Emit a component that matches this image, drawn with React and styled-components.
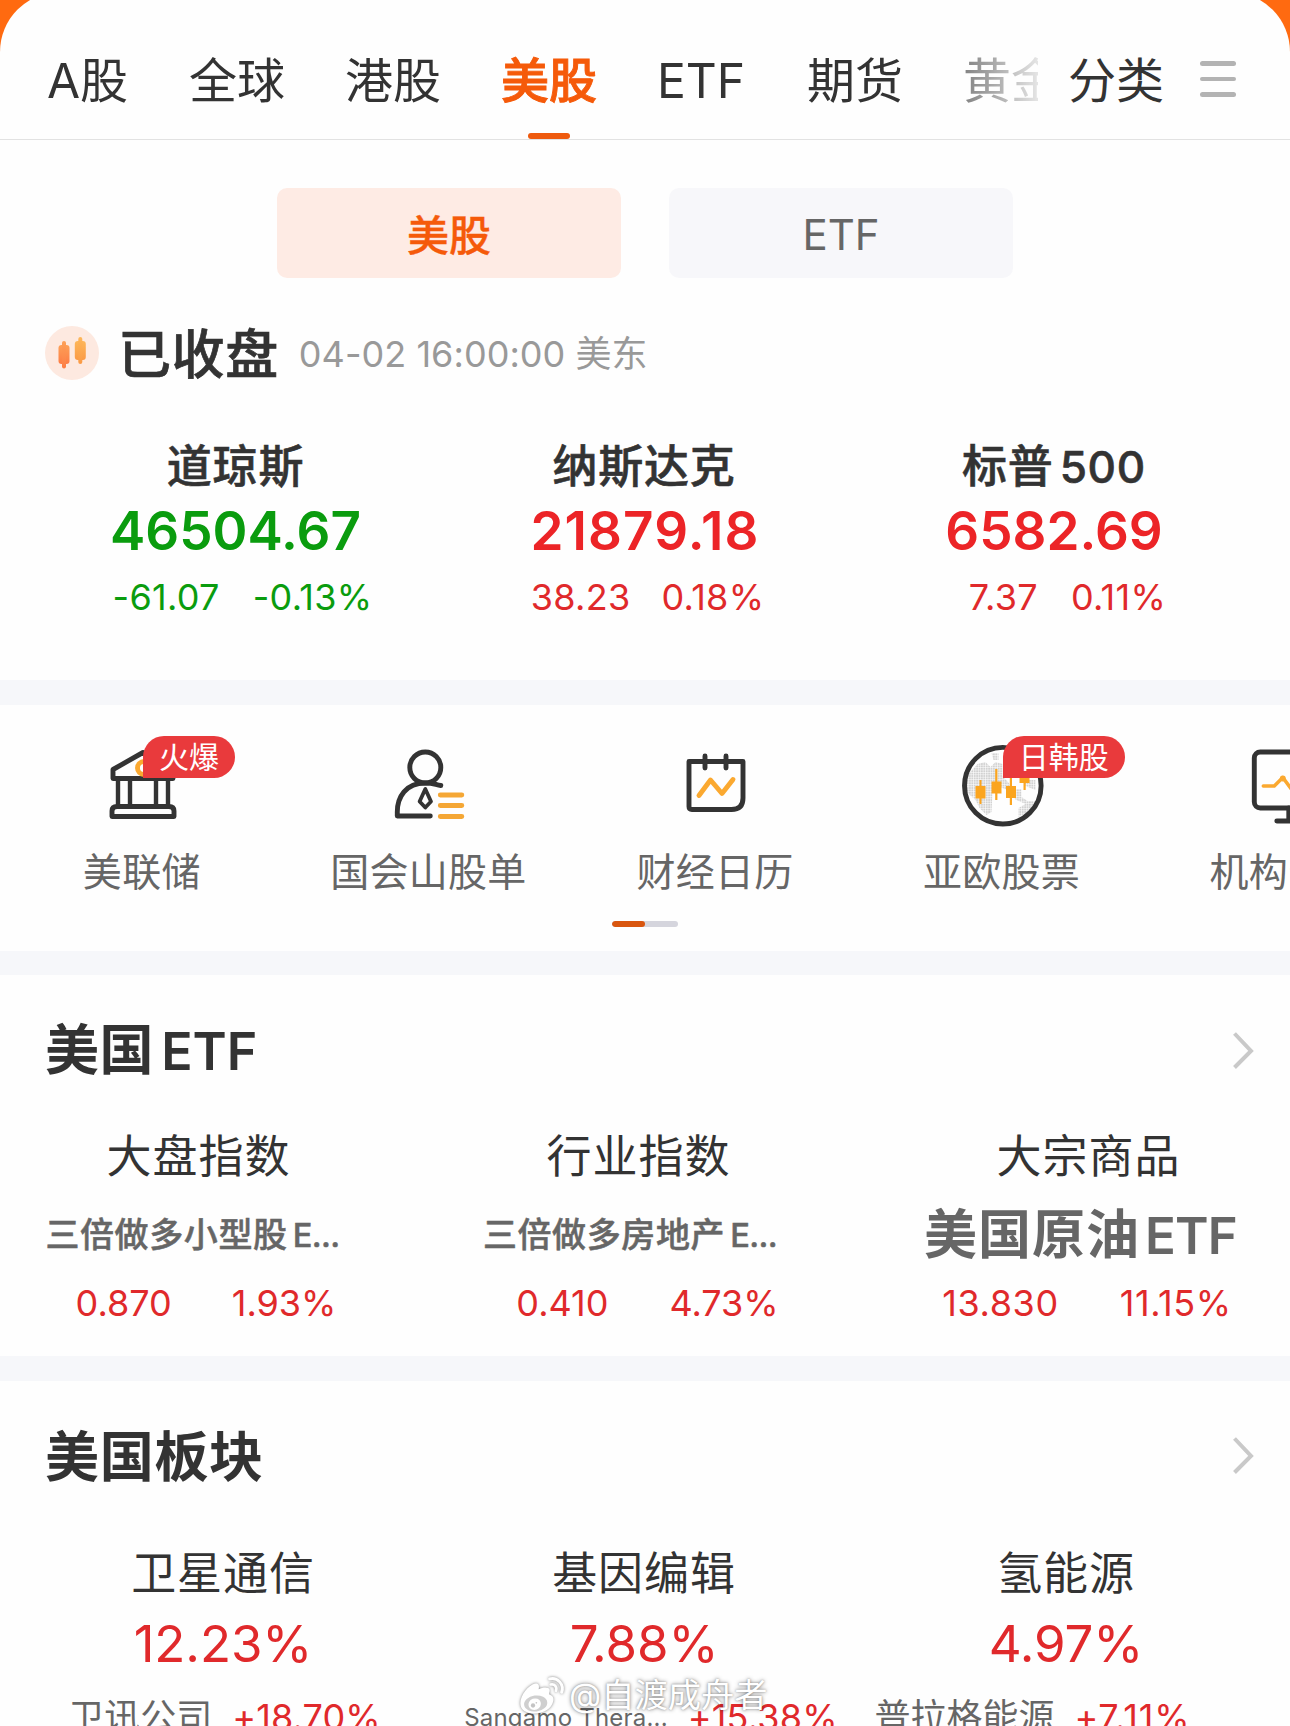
import React from "react";
import styled, { createGlobalStyle, css } from "styled-components";

const Global = createGlobalStyle`
  * { box-sizing: border-box; }
  html, body { margin: 0; padding: 0; }
  body {
    background: #ff6a10;
    font-family: Inter, "Noto Sans CJK SC", sans-serif;
    -webkit-font-smoothing: antialiased;
  }
`;

const colors = { ink: "#333", sub: "#666", mute: "#999", up: "#e0292b", upBold: "#ec2427", down: "#0a9c0e", accent: "#f55a0a" };

const Screen = styled.div`
  position: relative;
  width: 1290px;
  height: 1726px;
  overflow: hidden;
  background: #ff6a10;
`;

const Panel = styled.main`
  margin-top: -8px;
  padding-top: 8px;
  height: 1734px;
  background: #fefefe;
  border-radius: 60px 60px 0 0;
`;

const Nav = styled.nav`
  display: flex;
  height: 140px;
  border-bottom: 1px solid #e2e2e2;
`;

const TabList = styled.div`
  display: flex;
  gap: 60px;
  width: 1038px;
  padding-left: 47px;
  overflow: hidden;
  mask-image: linear-gradient(to right, #000 905px, rgba(0, 0, 0, 0.12) 1038px);
`;

const Tab = styled.div`
  position: relative;
  flex: none;
  width: ${(p) => p.$w || 96}px;
  height: 139px;
  padding-top: ${(p) => p.$top || 51}px;
  font-size: 48px;
  line-height: 60px;
  white-space: nowrap;
  color: ${colors.ink};
  ${(p) =>
    p.$active &&
    css`
      color: ${colors.accent};
      font-weight: 500;
      -webkit-text-stroke: 0.9px currentColor;
      &::after {
        content: "";
        position: absolute;
        left: 27px;
        bottom: 0;
        width: 42px;
        height: 6px;
        border-radius: 3px;
        background: #ee5a0e;
      }
    `}
`;

const NavTools = styled.div`
  display: flex;
  gap: 36px;
  padding-left: 30px;
`;

const Burger = styled.div`
  display: flex;
  flex-direction: column;
  gap: 11px;
  width: 36px;
  padding-top: 61px;
`;

const BurgerBar = styled.span`
  height: 4.6px;
  border-radius: 3px;
  background: #b3b3b3;
`;

const Segments = styled.div`
  display: flex;
  gap: 48px;
  padding: 48px 0 0 277px;
`;

const Segment = styled.div`
  width: 344px;
  height: 90px;
  border-radius: 10px;
  line-height: ${(p) => (p.$active ? 95 : 93)}px;
  text-align: center;
  font-size: 42px;
  font-weight: ${(p) => (p.$active ? 500 : 400)};
  -webkit-text-stroke: ${(p) => (p.$active ? 0.4 : 0)}px currentColor;
  color: ${(p) => (p.$active ? colors.accent : colors.sub)};
  background: ${(p) => (p.$active ? "#feebe4" : "#f7f7fa")};
`;

const Status = styled.div`
  display: flex;
  align-items: center;
  height: 54px;
  margin: 48px 0 58px;
  padding-left: 45px;
`;

const Text = styled.span`
  display: block;
  white-space: nowrap;
  height: ${(p) => p.$lh || 60}px;
  padding-top: ${(p) => p.$drop || 0}px;
  font-size: ${(p) => p.$size}px;
  line-height: ${(p) => p.$lh || 60}px;
  font-weight: ${(p) => p.$weight || 400};
  -webkit-text-stroke: ${(p) => p.$stroke || 0}px currentColor;
  letter-spacing: ${(p) => p.$ls || 0}px;
  color: ${(p) => p.$color || colors.ink};
  margin-left: ${(p) => p.$ml || 0}px;
`;

const Latin = styled.span`
  margin-left: ${(p) => p.$ml || 6}px;
  font-size: ${(p) => p.$scale || 0.96}em;
  letter-spacing: ${(p) => p.$ls || 0}px;
`;

const Columns = styled.div`
  display: grid;
  grid-template-columns: ${(p) => p.$tracks};
`;

const Column = styled.div`
  display: flex;
  flex-direction: column;
  align-items: center;
`;

const Pair = styled.div`
  display: flex;
  gap: ${(p) => p.$gap}px;
  margin-top: ${(p) => p.$mt || 0}px;
  margin-left: ${(p) => p.$ml || 0}px;
`;

const Section = styled.section`
  height: ${(p) => p.$h}px;
  padding-top: ${(p) => p.$pt || 0}px;
`;

const Divider = styled.div`
  height: ${(p) => p.$h}px;
  background: #f6f7fa;
`;

const Shortcuts = styled.div`
  display: flex;
  margin-left: -1.5px;
  padding-top: 31px;
  overflow: hidden;
`;

const Shortcut = styled.div`
  position: relative;
  flex: none;
  display: flex;
  flex-direction: column;
  align-items: center;
  width: 286.6px;
`;

const Glyph = styled.svg`
  display: block;
  width: 96px;
  height: 96px;
  margin: 0 0 10px 3px;
  fill: none;
  stroke: #333;
  stroke-width: 4.9;
  stroke-linejoin: round;
  stroke-linecap: round;
`;

const Badge = styled.span`
  position: absolute;
  left: ${(p) => p.$x}px;
  top: 0;
  height: 42px;
  width: ${(p) => p.$w}px;
  line-height: 43px;
  text-align: center;
  border-radius: 21px 21px 21px 0;
  font-size: 30px;
  white-space: nowrap;
  color: #fff;
  background: #e93a3c;
`;

const Pager = styled.div`
  width: 66px;
  height: 6px;
  margin: 19px auto 0;
  border-radius: 3px;
  overflow: hidden;
  background: #d5d5dd;
`;

const PagerThumb = styled.div`
  width: 50%;
  height: 100%;
  border-radius: 3px;
  background: #d9560f;
`;

const SectionHead = styled.header`
  display: flex;
  justify-content: space-between;
  align-items: center;
  height: 60px;
  margin-bottom: ${(p) => p.$mb}px;
  padding: 0 34px 0 45px;
`;

const Chevron = styled.svg`
  width: 24px;
  height: 40px;
  fill: none;
  stroke: #c9c9c9;
  stroke-width: 4;
`;

const Watermark = styled.div`
  position: absolute;
  left: 517px;
  top: 1672px;
  display: flex;
  align-items: center;
  gap: 2px;
  height: 46px;
  color: #fff;
  font-size: 33.3px;
  line-height: 46px;
  white-space: nowrap;
  text-shadow: 0 0 4px rgba(0, 0, 0, 0.45), 0 0 2px rgba(0, 0, 0, 0.3);
  svg {
    width: 50px;
    height: 42px;
    filter: drop-shadow(0 0 1.5px rgba(0, 0, 0, 0.5));
  }
`;

const WeiboLogo = () => (
  <svg viewBox="50 65 150 125">
    <path
      d="M60 152C60 128 84 98 104 93C114 91 118 98 115 110C128 104 146 103 148 112C149 118 145 122 147 126C156 129 161 135 159 145C155 168 130 183 103 183C78 183 60 172 60 152Z"
      fill="#fff"
    />
    <ellipse cx="106" cy="153" rx="35" ry="24" fill="#cfcfcf" transform="rotate(-8 106 153)" />
    <ellipse cx="103" cy="155" rx="19" ry="17" fill="#fff" transform="rotate(-20 103 155)" />
    <circle cx="98" cy="159" r="6.5" fill="#c4c4c4" />
    <circle cx="108" cy="151" r="2.5" fill="#c4c4c4" />
    <path d="M148 79C172 73 192 96 184 119" fill="none" stroke="#fff" strokeWidth="9" strokeLinecap="round" />
    <path d="M151 96C163 93 171 104 167 115" fill="none" stroke="#fff" strokeWidth="8" strokeLinecap="round" />
  </svg>
);

const MarketIcon = () => (
  <svg width="54" height="54" viewBox="0 0 54 54">
    <defs>
      <linearGradient id="candleA" x1="0" y1="0" x2="0" y2="1">
        <stop offset="0" stopColor="#fda057" />
        <stop offset="1" stopColor="#fd7d45" />
      </linearGradient>
      <linearGradient id="candleB" x1="0" y1="0" x2="0" y2="1">
        <stop offset="0" stopColor="#fdb75a" />
        <stop offset="1" stopColor="#fb9a45" />
      </linearGradient>
    </defs>
    <circle cx="27" cy="27" r="27" fill="#fde9e0" />
    <g fill="url(#candleA)">
      <rect x="13.5" y="19" width="11" height="19" rx="3" />
      <rect x="17" y="15" width="4" height="27.5" rx="2" />
    </g>
    <g fill="url(#candleB)">
      <rect x="29.8" y="15" width="11" height="19" rx="3" />
      <rect x="33.3" y="11" width="4" height="27" rx="2" />
    </g>
  </svg>
);

const BankIcon = () => (
  <Glyph viewBox="95 736 96 96">
    <path d="M113 778.5V769.5L143 752.5L173 769.5V778.5Z" />
    <circle cx="144" cy="768" r="6.5" stroke="#fba930" />
    <path d="M118 780V806M130 780V806M156 780V806M168 780V806" strokeWidth="4.4" />
    <path d="M112 816.5V811Q112 806.5 117 806.5H169Q174 806.5 174 811V816.5Z" />
  </Glyph>
);

const PersonIcon = () => (
  <Glyph viewBox="382.2 736 96 96">
    <circle cx="425.5" cy="767.5" r="15.5" />
    <path d="M441 785.5C436 785 434 783 425.500 783C406 783 397.500 797 397.500 812V816H430.5" />
    <path d="M425.5 789L419.8 801.5L425.5 807.5L431.2 801.5Z" strokeWidth="3.8" />
    <path d="M440.5 795H462M440.5 805.5H462M440.5 816.5H462" stroke="#f5a735" />
  </Glyph>
);

const CalendarIcon = () => (
  <Glyph viewBox="668.5 736 96 96">
    <path d="M689.5 761.5H743.5V798Q743.5 809.5 732 809.5H692.5Q689.5 809.5 689.5 806.5Z" />
    <path d="M705.5 756V768M726.5 756V768" />
    <path d="M699.5 795.5L711 780L722.5 793.5L733.5 779.5" stroke="#fba930" />
  </Glyph>
);

const GlobeIcon = () => (
  <Glyph viewBox="955.5 736 96 96">
    <defs>
      <pattern id="dots" width="2.4" height="2.4" patternUnits="userSpaceOnUse">
        <rect width="1.9" height="1.9" fill="#d2d2d2" stroke="none" />
      </pattern>
    </defs>
    <g fill="url(#dots)" stroke="none">
      <path d="M978 764L986 762L991 767L996 762L1003 764V776L1012 786L1008 790L998 786L993 793L992 812L987 815L980 808L976 800L967 792V776Z" />
      <path d="M1016 789H1022V797L1028 801H1036L1030 811L1019 817V808L1026 804L1015 799Z" />
      <path d="M992 753H999V760H994ZM1024 780H1036V790L1026 786Z" />
    </g>
    <circle cx="1003.3" cy="785.7" r="38.3" />
    <g stroke="none" fill="#fba51f">
      <rect x="976" y="786" width="10" height="12.5" />
      <rect x="980" y="780" width="2" height="24" />
      <rect x="992" y="781.5" width="10" height="12" />
      <rect x="995.7" y="769" width="2.2" height="31" />
      <rect x="1006.5" y="786" width="10" height="12" />
      <rect x="1010.3" y="778" width="2.2" height="27" />
      <rect x="1020" y="772" width="10" height="11" />
      <rect x="1024" y="770" width="2.2" height="20" />
    </g>
  </Glyph>
);

const MonitorIcon = () => (
  <Glyph viewBox="1241.7 736 96 96">
    <rect x="1254" y="752" width="68" height="56" rx="6" />
    <path d="M1288.5 808V821M1276.5 821H1300.5" />
    <path d="M1263 786H1274L1282.5 777.5L1292.5 791L1301.5 778L1309 786H1314" stroke="#fba930" strokeWidth="3.5" />
    <circle cx="1282.5" cy="778.5" r="2" stroke="#fba930" strokeWidth="2" />
  </Glyph>
);

const Arrow = () => (
  <Chevron viewBox="0 0 24 40">
    <path d="M2.5 3.5L19 21L2.5 37.5" />
  </Chevron>
);

const tabs = [
  { label: "A股", w: 82 },
  { label: "全球" },
  { label: "港股" },
  { label: "美股", active: true },
  { label: "ETF", w: 90 },
  { label: "期货" },
  { label: "黄金" },
];

const indices = [
  { name: "道琼斯", value: "46504.67", diff: "-61.07", pct: "-0.13%", tone: colors.down, bold: colors.down, gap: 33, shift: 14 },
  { name: "纳斯达克", value: "21879.18", valueLs: 1.1, valueMl: 2, diff: "38.23", pct: "0.18%", tone: colors.up, bold: colors.upBold, gap: 31, shift: 7 },
  { name: <>标普<Latin $ml={6} $scale={0.98} $ls={0.7}>500</Latin></>, value: "6582.69", diff: "7.37", pct: "0.11%", tone: colors.up, bold: colors.upBold, gap: 33, shift: 27 },
];

const shortcuts = [
  { label: "美联储", icon: <BankIcon />, badge: "火爆", x: 144.5, w: 92 },
  { label: "国会山股单", icon: <PersonIcon /> },
  { label: "财经日历", icon: <CalendarIcon /> },
  { label: "亚欧股票", icon: <GlobeIcon />, badge: "日韩股", x: 144.5, w: 122 },
  { label: "机构分析", icon: <MonitorIcon /> },
];

const etfs = [
  { name: "大盘指数", fund: <>三倍做多小型股<Latin $ml={5} $ls={-0.6}>E...</Latin></>, price: "0.870", pct: "1.93%", gap: 60, shift: 15, fundShift: -12 },
  { name: "行业指数", fund: <>三倍做多房地产<Latin $ml={5} $ls={-0.6}>E...</Latin></>, price: "0.410", pct: "4.73%", gap: 61, shift: 18, fundShift: -17 },
  { name: "大宗商品", fund: <>美国原油<Latin $ml={5} $ls={-0.8}>ETF</Latin></>, big: true, price: "13.830", pct: "11.15%", ls: 0.6, gap: 61, shift: -3, fundShift: -16 },
];

const sectors = [
  { name: "卫星通信", pct: "12.23%", stock: "卫讯公司", change: "+18.70%", gap: 20, shift: 3, ls: 0.1 },
  { name: "基因编辑", pct: "7.88%", stock: "Sangamo Thera...", small: true, change: "+15.38%", gap: 20, shift: 14, ls: 0.2 },
  { name: "氢能源", pct: "4.97%", stock: "普拉格能源", change: "+7.11%", gap: 20, shift: -67, ls: 0.9 },
];

export default function App() {
  return (
    <Screen>
      <Global />
      <Panel>
        <Nav>
          <TabList>
            {tabs.map((t) => (
              <Tab key={t.label} $w={t.w} $active={t.active}>{t.label}</Tab>
            ))}
          </TabList>
          <NavTools>
            <Tab>分类</Tab>
            <Burger><BurgerBar /><BurgerBar /><BurgerBar /></Burger>
          </NavTools>
        </Nav>

        <Section $h={540}>
          <Segments>
            <Segment $active>美股</Segment>
            <Segment>ETF</Segment>
          </Segments>
          <Status>
            <MarketIcon />
            <Text $size={53} $weight={500} $stroke={0.7} $ls={0.6} $drop={2} $ml={19}>已收盘</Text>
            <Text $size={36} $color={colors.mute} $ls={0.05} $drop={1} $ml={20}>04-02 16:00:00 美东</Text>
          </Status>
          <Columns $tracks="471px 346px 474px">
            {indices.map((i) => (
              <Column key={i.value}>
                <Text $size={45} $weight={500} $stroke={0.6} $lh={56} $ls={0.8} $drop={1}>{i.name}</Text>
                <Text $size={53} $weight={600} $lh={74} $ls={i.valueLs} $ml={i.valueMl} $color={i.bold}>{i.value}</Text>
                <Pair $gap={i.gap} $mt={9} $ml={i.shift}>
                  <Text $size={36} $lh={40} $ls={0.3} $color={i.tone}>{i.diff}</Text>
                  <Text $size={36} $lh={40} $ls={0.3} $color={i.tone}>{i.pct}</Text>
                </Pair>
              </Column>
            ))}
          </Columns>
        </Section>
        <Divider $h={25} />

        <Section $h={246}>
          <Shortcuts>
            {shortcuts.map((s) => (
              <Shortcut key={s.label}>
                {s.icon}
                {s.badge && <Badge $x={s.x} $w={s.w}>{s.badge}</Badge>}
                <Text $size={39} $ls={0.3} $color={colors.sub}>{s.label}</Text>
              </Shortcut>
            ))}
          </Shortcuts>
          <Pager><PagerThumb /></Pager>
        </Section>
        <Divider $h={24} />

        <Section $h={381} $pt={45}>
          <SectionHead $mb={46}>
            <Text $size={54} $weight={600} $ls={0.6} $drop={1}>美国<Latin $ls={0} $ml={7}>ETF</Latin></Text>
            <Arrow />
          </SectionHead>
          <Columns $tracks="397px 483px 417px">
            {etfs.map((e) => (
              <Column key={e.name}>
                <Text $size={45} $lh={60} $ls={1} $drop={1}>{e.name}</Text>
                <Text $size={e.big ? 53 : 34} $weight={e.big ? 600 : 500} $stroke={e.big ? 0 : 0.5} $lh={96} $ls={e.big ? 1 : 0.6} $drop={1} $color={colors.sub} $ml={e.fundShift}>{e.fund}</Text>
                <Pair $gap={e.gap} $ml={e.shift}>
                  <Text $size={36} $lh={42} $ls={e.ls} $color={colors.up}>{e.price}</Text>
                  <Text $size={36} $lh={42} $ls={e.ls} $color={colors.up}>{e.pct}</Text>
                </Pair>
              </Column>
            ))}
          </Columns>
        </Section>
        <Divider $h={25} />

        <Section $h={345} $pt={44}>
          <SectionHead $mb={57}>
            <Text $size={54} $weight={600} $ls={0.7} $drop={3}>美国板块</Text>
            <Arrow />
          </SectionHead>
          <Columns $tracks="446px 396px 448px">
            {sectors.map((s) => (
              <Column key={s.name}>
                <Text $size={45} $lh={60} $ls={0.9} $drop={2}>{s.name}</Text>
                <Text $size={51} $lh={82} $ls={-0.1} $drop={1} $color={colors.up}>{s.pct}</Text>
                <Pair $gap={s.gap} $mt={12} $ml={s.shift}>
                  <Text $size={s.small ? 24 : 36} $lh={42} $ls={s.small ? 0.2 : 0} $drop={s.small ? 1 : 0} $color={colors.sub}>{s.stock}</Text>
                  <Text $size={36} $lh={42} $ls={s.ls} $color={colors.up}>{s.change}</Text>
                </Pair>
              </Column>
            ))}
          </Columns>
        </Section>
      </Panel>
      <Watermark><WeiboLogo /><span>@自渡成舟者</span></Watermark>
    </Screen>
  );
}
